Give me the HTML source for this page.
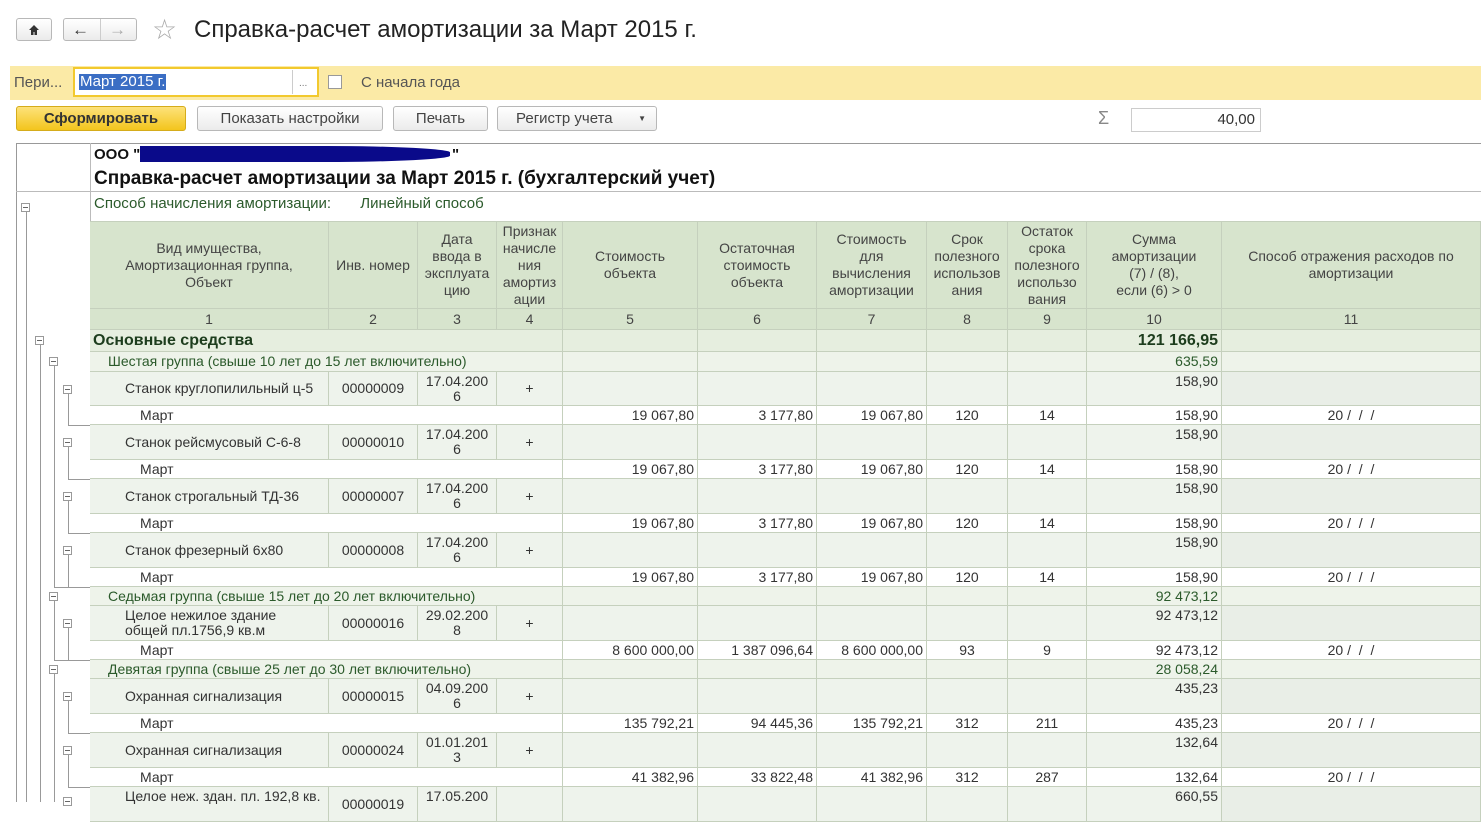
<!DOCTYPE html>
<html><head><meta charset="utf-8"><style>
*{box-sizing:border-box;margin:0;padding:0}
body{width:1481px;height:802px;overflow:hidden;background:#fff;font-family:"Liberation Sans",Arial,sans-serif;font-size:14px;color:#333;position:relative}
.a{position:absolute}
.btn{position:absolute;height:25px;border:1px solid #b8b8b8;border-radius:3px;background:linear-gradient(#fff,#ebebeb);font-size:15px;color:#444;text-align:center;line-height:23px}
.r{position:absolute;left:90px;width:1391px;display:grid;grid-template-columns:239px 89px 79px 66px 135px 119px 110px 81px 79px 135px 259px}
.r>div{border-right:1px solid #c5d0bd;border-bottom:1px solid #c5d0bd;padding:0 3px;display:flex;align-items:center;line-height:15px}
.sp{grid-column:span 4;white-space:nowrap}
.h>div{background:#d7e4cd;justify-content:center;text-align:center;color:#444;line-height:17px}
.o>div{background:#eef3ec}
.o>div:nth-child(11){background:#e9eee7}
.m>div{background:#fff}
.g>div{background:#eef3ea}
.rt{justify-content:flex-end}
.ct{justify-content:center;text-align:center}
.vl{position:absolute;width:1px;background:#999}
.hl{position:absolute;height:1px;background:#999}
.tg{position:absolute;width:9px;height:9px;border:1px solid #999;background:#fff}
.tg::after{content:"";position:absolute;left:1px;top:3px;width:5px;height:1px;background:#666}
</style></head><body>
<div class="btn" style="left:16px;top:18px;width:36px;height:23px"><svg width="12" height="12" viewBox="0 0 12 12" style="margin-top:5px"><path d="M6 1L1 6h2v5h2.5V8h1v3H9V6h2z" fill="#333"/></svg></div>
<div class="btn" style="left:63px;top:18px;width:74px;height:23px"></div>
<div class="a" style="left:100px;top:19px;width:1px;height:21px;background:#ccc"></div>
<div class="a" style="left:72px;top:20px;font-size:17px;color:#333;font-weight:bold">&#8592;</div>
<div class="a" style="left:109px;top:20px;font-size:17px;color:#aaa">&#8594;</div>
<div class="a" style="left:152px;top:13px;font-size:28px;color:#aaa">&#9734;</div>
<div class="a" style="left:194px;top:16px;font-size:24px;color:#222">Справка-расчет амортизации за Март 2015 г.</div>

<div class="a" style="left:10px;top:66px;width:1471px;height:34px;background:#fbeaa6"></div>
<div class="a" style="left:14px;top:74px;font-size:15px;color:#555">Пери...</div>
<div class="a" style="left:73px;top:67px;width:246px;height:30px;border:2px solid #f2c92e;background:#fff"></div>
<div class="a" style="left:79px;top:74px;background:#3b6ec4;color:#fff;font-size:15px;padding:0 1px;line-height:16px">Март 2015 г.</div>
<div class="a" style="left:292px;top:70px;width:1px;height:24px;background:#ccc"></div>
<div class="a" style="left:299px;top:78px;font-size:10px;color:#777">...</div>
<div class="a" style="left:328px;top:75px;width:14px;height:14px;border:1px solid #999;background:#fff"></div>
<div class="a" style="left:361px;top:74px;font-size:15px;color:#555">С начала года</div>

<div class="btn" style="left:16px;top:106px;width:170px;background:linear-gradient(#fde27a,#f3c51d);border-color:#d5ac1b;font-weight:bold;color:#333">Сформировать</div>
<div class="btn" style="left:197px;top:106px;width:186px">Показать настройки</div>
<div class="btn" style="left:393px;top:106px;width:95px">Печать</div>
<div class="btn" style="left:497px;top:106px;width:160px;text-align:left;padding-left:18px">Регистр учета <span style="position:absolute;right:10px;font-size:8px">&#9660;</span></div>
<div class="a" style="left:1098px;top:108px;font-size:18px;color:#888">&Sigma;</div>
<div class="a" style="left:1131px;top:108px;width:130px;height:24px;border:1px solid #ccc;text-align:right;padding-right:5px;font-size:15px;line-height:22px">40,00</div>

<div class="a" style="left:16px;top:143px;width:1465px;height:1px;background:#999"></div>
<div class="vl" style="left:16px;top:143px;height:659px"></div>
<div class="vl" style="left:90px;top:143px;height:78px;background:#bbb"></div>
<div class="a" style="left:16px;top:191px;width:1465px;height:1px;background:#bbb"></div>
<div class="a" style="left:94px;top:146px;font-size:15px;font-weight:bold;color:#111">ООО "</div>
<div class="a" style="left:140px;top:146px;width:310px;height:16px;background:#0a0a8a;border-radius:0 40% 40% 0"></div>
<div class="a" style="left:452px;top:146px;font-size:15px;font-weight:bold;color:#111">"</div>
<div class="a" style="left:94px;top:168px;font-size:19px;font-weight:bold;color:#111">Справка-расчет амортизации за Март 2015 г. (бухгалтерский учет)</div>
<div class="a" style="left:94px;top:195px;font-size:15px;color:#2b5a2b">Способ начисления амортизации:&nbsp;&nbsp;&nbsp;&nbsp;&nbsp;&nbsp;&nbsp;Линейный способ</div>

<div class="r h" style="top:221px;height:88px;border-top:1px solid #c5d0bd"><div>Вид имущества,<br>Амортизационная группа,<br>Объект</div><div>Инв. номер</div><div>Дата<br>ввода в<br>эксплуата<br>цию</div><div>Признак<br>начисле<br>ния<br>амортиз<br>ации</div><div>Стоимость<br>объекта</div><div>Остаточная<br>стоимость<br>объекта</div><div>Стоимость<br>для<br>вычисления<br>амортизации</div><div>Срок<br>полезного<br>использов<br>ания</div><div>Остаток<br>срока<br>полезного<br>использо<br>вания</div><div>Сумма<br>амортизации<br>(7) / (8),<br>если (6) &gt; 0</div><div>Способ отражения расходов по<br>амортизации</div></div>
<div class="r h" style="top:309px;height:21px"><div>1</div><div>2</div><div>3</div><div>4</div><div>5</div><div>6</div><div>7</div><div>8</div><div>9</div><div>10</div><div>11</div></div>

<div class="r g" style="top:330px;height:22px"><div class="sp" style="font-weight:bold;font-size:16px;color:#1d3d1d;background:#e6eedf">Основные&nbsp;средства</div><div style="background:#e6eedf"></div><div style="background:#e6eedf"></div><div style="background:#e6eedf"></div><div style="background:#e6eedf"></div><div style="background:#e6eedf"></div><div class="rt" style="background:#e6eedf;font-weight:bold;font-size:16px;color:#1d3d1d">121 166,95</div><div style="background:#e6eedf"></div></div>
<div class="r g" style="top:352px;height:20px"><div class="sp" style="padding-left:18px;color:#2b5a2b">Шестая группа (свыше 10 лет до 15 лет включительно)</div><div></div><div></div><div></div><div></div><div></div><div class="rt" style="color:#2b5a2b">635,59</div><div></div></div>

<div class="r o" style="top:372px;height:34px"><div style="padding-left:35px">Станок круглопилильный ц-5</div><div class="ct">00000009</div><div class="ct">17.04.200<br>6</div><div class="ct">+</div><div></div><div></div><div></div><div></div><div></div><div class="rt" style="align-items:flex-start;padding-top:2px">158,90</div><div></div></div>
<div class="r m" style="top:406px;height:19px"><div class="sp" style="padding-left:50px">Март</div><div class="rt">19 067,80</div><div class="rt">3 177,80</div><div class="rt">19 067,80</div><div class="ct">120</div><div class="ct">14</div><div class="rt">158,90</div><div class="ct">20 /&nbsp; /&nbsp; /</div></div>
<div class="r o" style="top:425px;height:35px"><div style="padding-left:35px">Станок рейсмусовый С-6-8</div><div class="ct">00000010</div><div class="ct">17.04.200<br>6</div><div class="ct">+</div><div></div><div></div><div></div><div></div><div></div><div class="rt" style="align-items:flex-start;padding-top:2px">158,90</div><div></div></div>
<div class="r m" style="top:460px;height:19px"><div class="sp" style="padding-left:50px">Март</div><div class="rt">19 067,80</div><div class="rt">3 177,80</div><div class="rt">19 067,80</div><div class="ct">120</div><div class="ct">14</div><div class="rt">158,90</div><div class="ct">20 /&nbsp; /&nbsp; /</div></div>
<div class="r o" style="top:479px;height:35px"><div style="padding-left:35px">Станок строгальный ТД-36</div><div class="ct">00000007</div><div class="ct">17.04.200<br>6</div><div class="ct">+</div><div></div><div></div><div></div><div></div><div></div><div class="rt" style="align-items:flex-start;padding-top:2px">158,90</div><div></div></div>
<div class="r m" style="top:514px;height:19px"><div class="sp" style="padding-left:50px">Март</div><div class="rt">19 067,80</div><div class="rt">3 177,80</div><div class="rt">19 067,80</div><div class="ct">120</div><div class="ct">14</div><div class="rt">158,90</div><div class="ct">20 /&nbsp; /&nbsp; /</div></div>
<div class="r o" style="top:533px;height:35px"><div style="padding-left:35px">Станок фрезерный 6х80</div><div class="ct">00000008</div><div class="ct">17.04.200<br>6</div><div class="ct">+</div><div></div><div></div><div></div><div></div><div></div><div class="rt" style="align-items:flex-start;padding-top:2px">158,90</div><div></div></div>
<div class="r m" style="top:568px;height:19px"><div class="sp" style="padding-left:50px">Март</div><div class="rt">19 067,80</div><div class="rt">3 177,80</div><div class="rt">19 067,80</div><div class="ct">120</div><div class="ct">14</div><div class="rt">158,90</div><div class="ct">20 /&nbsp; /&nbsp; /</div></div>

<div class="r g" style="top:587px;height:19px"><div class="sp" style="padding-left:18px;color:#2b5a2b">Седьмая группа (свыше 15 лет до 20 лет включительно)</div><div></div><div></div><div></div><div></div><div></div><div class="rt" style="color:#2b5a2b">92 473,12</div><div></div></div>
<div class="r o" style="top:606px;height:35px"><div style="padding-left:35px">Целое нежилое здание<br>общей пл.1756,9 кв.м</div><div class="ct">00000016</div><div class="ct">29.02.200<br>8</div><div class="ct">+</div><div></div><div></div><div></div><div></div><div></div><div class="rt" style="align-items:flex-start;padding-top:2px">92 473,12</div><div></div></div>
<div class="r m" style="top:641px;height:19px"><div class="sp" style="padding-left:50px">Март</div><div class="rt">8 600 000,00</div><div class="rt">1 387 096,64</div><div class="rt">8 600 000,00</div><div class="ct">93</div><div class="ct">9</div><div class="rt">92 473,12</div><div class="ct">20 /&nbsp; /&nbsp; /</div></div>

<div class="r g" style="top:660px;height:19px"><div class="sp" style="padding-left:18px;color:#2b5a2b">Девятая группа (свыше 25 лет до 30 лет включительно)</div><div></div><div></div><div></div><div></div><div></div><div class="rt" style="color:#2b5a2b">28 058,24</div><div></div></div>
<div class="r o" style="top:679px;height:35px"><div style="padding-left:35px">Охранная сигнализация</div><div class="ct">00000015</div><div class="ct">04.09.200<br>6</div><div class="ct">+</div><div></div><div></div><div></div><div></div><div></div><div class="rt" style="align-items:flex-start;padding-top:2px">435,23</div><div></div></div>
<div class="r m" style="top:714px;height:19px"><div class="sp" style="padding-left:50px">Март</div><div class="rt">135 792,21</div><div class="rt">94 445,36</div><div class="rt">135 792,21</div><div class="ct">312</div><div class="ct">211</div><div class="rt">435,23</div><div class="ct">20 /&nbsp; /&nbsp; /</div></div>
<div class="r o" style="top:733px;height:35px"><div style="padding-left:35px">Охранная сигнализация</div><div class="ct">00000024</div><div class="ct">01.01.201<br>3</div><div class="ct">+</div><div></div><div></div><div></div><div></div><div></div><div class="rt" style="align-items:flex-start;padding-top:2px">132,64</div><div></div></div>
<div class="r m" style="top:768px;height:19px"><div class="sp" style="padding-left:50px">Март</div><div class="rt">41 382,96</div><div class="rt">33 822,48</div><div class="rt">41 382,96</div><div class="ct">312</div><div class="ct">287</div><div class="rt">132,64</div><div class="ct">20 /&nbsp; /&nbsp; /</div></div>
<div class="r o" style="top:787px;height:35px"><div style="padding-left:35px;align-items:flex-start;padding-top:2px">Целое неж. здан. пл. 192,8 кв.</div><div class="ct">00000019</div><div class="ct" style="align-items:flex-start;padding-top:2px">17.05.200</div><div class="ct"></div><div></div><div></div><div></div><div></div><div></div><div class="rt" style="align-items:flex-start;padding-top:2px">660,55</div><div></div></div>

<div class="vl" style="left:26px;top:212px;height:590px"></div>
<div class="tg" style="left:21px;top:203px"></div>
<div class="vl" style="left:40px;top:345px;height:457px"></div>
<div class="tg" style="left:35px;top:336px"></div>
<div class="vl" style="left:54px;top:366px;height:221px"></div>
<div class="hl" style="left:54px;top:587px;width:36px"></div>
<div class="tg" style="left:49px;top:357px"></div>
<div class="vl" style="left:68px;top:394px;height:32px"></div><div class="hl" style="left:68px;top:425px;width:22px"></div><div class="tg" style="left:63px;top:385px"></div>
<div class="vl" style="left:68px;top:447px;height:32px"></div><div class="hl" style="left:68px;top:479px;width:22px"></div><div class="tg" style="left:63px;top:438px"></div>
<div class="vl" style="left:68px;top:501px;height:32px"></div><div class="hl" style="left:68px;top:533px;width:22px"></div><div class="tg" style="left:63px;top:492px"></div>
<div class="vl" style="left:68px;top:555px;height:32px"></div><div class="hl" style="left:68px;top:587px;width:22px"></div><div class="tg" style="left:63px;top:546px"></div>
<div class="tg" style="left:49px;top:592px"></div>
<div class="vl" style="left:54px;top:601px;height:59px"></div><div class="hl" style="left:54px;top:660px;width:36px"></div>
<div class="vl" style="left:68px;top:628px;height:32px"></div><div class="tg" style="left:63px;top:619px"></div>
<div class="tg" style="left:49px;top:665px"></div>
<div class="vl" style="left:54px;top:674px;height:128px"></div>
<div class="vl" style="left:68px;top:701px;height:32px"></div><div class="hl" style="left:68px;top:733px;width:22px"></div><div class="tg" style="left:63px;top:692px"></div>
<div class="vl" style="left:68px;top:755px;height:32px"></div><div class="hl" style="left:68px;top:787px;width:22px"></div><div class="tg" style="left:63px;top:746px"></div>
<div class="tg" style="left:63px;top:797px"></div>
</body></html>
